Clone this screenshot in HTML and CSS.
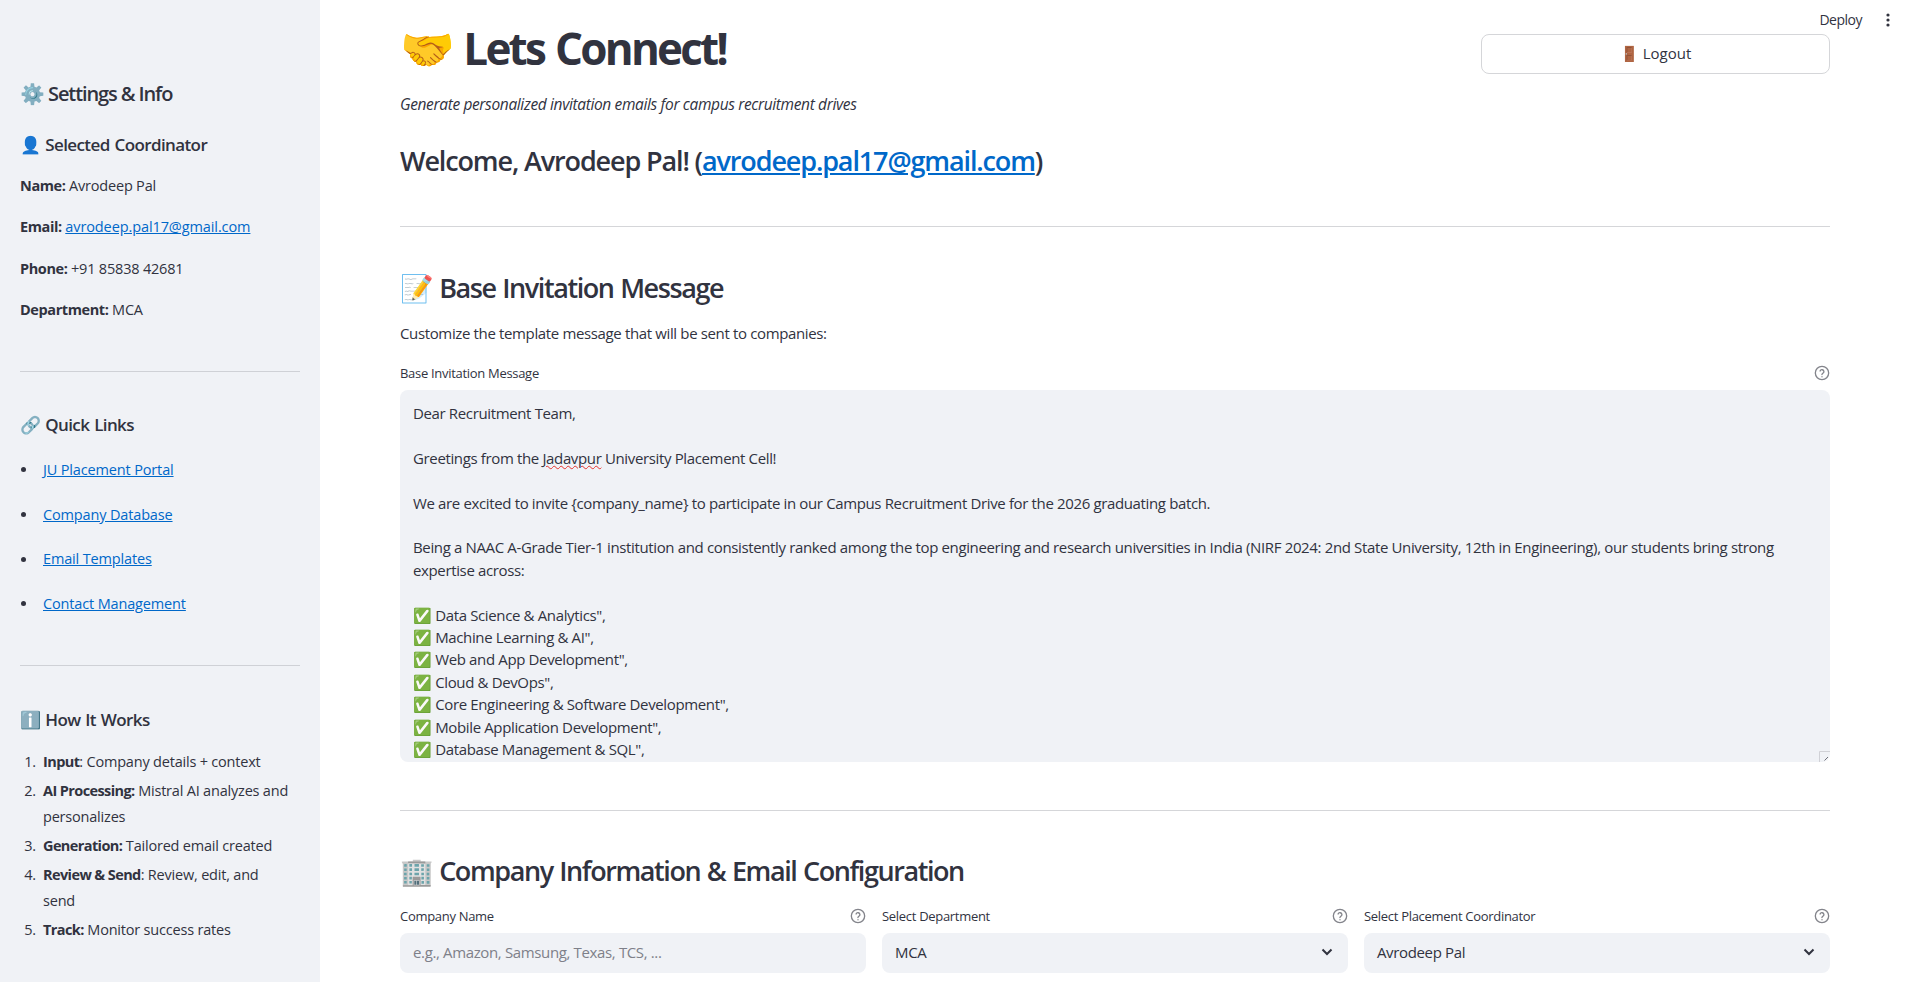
FILE: index.html
```html
<!DOCTYPE html>
<html lang="en">
<head>
  <meta charset="UTF-8" />
  <title>Lets Connect</title>
  <link rel="stylesheet" href="styles.css">
</head>
<body>
  <div class="app">
    <aside class="sidebar">
      <h2 class="side-title">⚙️ Settings &amp; Info</h2>
      <h3 class="side-head">👤 Selected Coordinator</h3>
      <p class="side-row"><b>Name:</b> Avrodeep Pal</p>
      <p class="side-row"><b>Email:</b> <a href="#">avrodeep.pal17@gmail.com</a></p>
      <p class="side-row"><b>Phone:</b> +91 85838 42681</p>
      <p class="side-row"><b>Department:</b> MCA</p>
      <hr class="side-rule">
      <h3 class="side-head">🔗 Quick Links</h3>
      <ul class="side-links">
        <li><a href="#">JU Placement Portal</a></li>
        <li><a href="#">Company Database</a></li>
        <li><a href="#">Email Templates</a></li>
        <li><a href="#">Contact Management</a></li>
      </ul>
      <hr class="side-rule">
      <h3 class="side-head">ℹ️ How It Works</h3>
      <ol class="side-steps">
        <li><b>Input</b>: Company details + context</li>
        <li><b>AI Processing:</b> Mistral AI analyzes and personalizes</li>
        <li><b>Generation:</b> Tailored email created</li>
        <li><b>Review &amp; Send</b>: Review, edit, and send</li>
        <li><b>Track:</b> Monitor success rates</li>
      </ol>
    </aside>

    <main class="main">
      <div class="topbar">
        <span class="deploy">Deploy</span>
        <svg class="dots" width="4" height="14" viewBox="0 0 4 14"><circle cx="2" cy="2" r="1.6"/><circle cx="2" cy="7" r="1.6"/><circle cx="2" cy="12" r="1.6"/></svg>
      </div>

      <div class="head-row">
        <h1 class="page-title">🤝 Lets Connect!</h1>
        <button class="logout">🚪 Logout</button>
      </div>
      <p class="subtitle">Generate personalized invitation emails for campus recruitment drives</p>
      <h3 class="welcome">Welcome, Avrodeep Pal! (<a href="#">avrodeep.pal17@gmail.com</a>)</h3>
      <hr class="rule rule-top">

      <h2 class="section">📝 Base Invitation Message</h2>
      <p class="intro">Customize the template message that will be sent to companies:</p>
      <div class="label-row">
        <label>Base Invitation Message</label>
        <svg class="help" viewBox="0 0 24 24"><circle cx="12" cy="12" r="10"/><path d="M9.1 9a3 3 0 0 1 5.8 1c0 2-3 2.6-3 4.2"/><path d="M12 17.6v.1"/></svg>
      </div>
      <div class="message">
        <p>Dear Recruitment Team,</p>
        <p>Greetings from the <span class="typo">Jadavpur</span> University Placement Cell!</p>
        <p>We are excited to invite {company_name} to participate in our Campus Recruitment Drive for the 2026 graduating batch.</p>
        <p>Being a NAAC A-Grade Tier-1 institution and consistently ranked among the top engineering and research universities in India (NIRF 2024: 2nd State University, 12th in Engineering), our students bring strong expertise across:</p>
        <p>✅ Data Science &amp; Analytics",<br>✅ Machine Learning &amp; AI",<br>✅ Web and App Development",<br>✅ Cloud &amp; DevOps",<br>✅ Core Engineering &amp; Software Development",<br>✅ Mobile Application Development",<br>✅ Database Management &amp; SQL",</p>
        <svg class="grip" width="11" height="11" viewBox="0 0 11 11"><path class="grip-box" d="M.5 11V.5H11"/><path class="grip-mark" d="M5.5 9.5 9 6M8 10l1.5-1.5"/></svg>
      </div>
      <hr class="rule rule-mid">

      <h2 class="section section-company">🏢 Company Information &amp; Email Configuration</h2>
      <div class="fields">
        <div class="field">
          <div class="label-row">
            <label>Company Name</label>
            <svg class="help" viewBox="0 0 24 24"><circle cx="12" cy="12" r="10"/><path d="M9.1 9a3 3 0 0 1 5.8 1c0 2-3 2.6-3 4.2"/><path d="M12 17.6v.1"/></svg>
          </div>
          <div class="control placeholder">e.g., Amazon, Samsung, Texas, TCS, ...</div>
        </div>
        <div class="field">
          <div class="label-row">
            <label>Select Department</label>
            <svg class="help" viewBox="0 0 24 24"><circle cx="12" cy="12" r="10"/><path d="M9.1 9a3 3 0 0 1 5.8 1c0 2-3 2.6-3 4.2"/><path d="M12 17.6v.1"/></svg>
          </div>
          <div class="control">MCA
            <svg class="chevron" width="12" height="8" viewBox="0 0 12 8"><path d="M1.5 1.5 6 6l4.5-4.5"/></svg>
          </div>
        </div>
        <div class="field">
          <div class="label-row">
            <label>Select Placement Coordinator</label>
            <svg class="help" viewBox="0 0 24 24"><circle cx="12" cy="12" r="10"/><path d="M9.1 9a3 3 0 0 1 5.8 1c0 2-3 2.6-3 4.2"/><path d="M12 17.6v.1"/></svg>
          </div>
          <div class="control">Avrodeep Pal
            <svg class="chevron" width="12" height="8" viewBox="0 0 12 8"><path d="M1.5 1.5 6 6l4.5-4.5"/></svg>
          </div>
        </div>
      </div>
    </main>
  </div>
</body>
</html>
```

FILE: styles.css
```css
* {
  box-sizing: border-box;
}
html, body {
  margin: 0;
  height: 982px;
  overflow: hidden;
  background: #fff;
}
body {
  font-family: "Open Sans", "Noto Sans", sans-serif;
  color: #31333f;
  font-size: 15px;
  letter-spacing: -0.36px;
}
a {
  color: #0068c9;
}
.app {
  display: flex;
  height: 982px;
}

/* sidebar */
.sidebar {
  width: 320px;
  flex: none;
  background: #f0f2f6;
  padding: 80px 20px 0;
}
.side-title {
  margin: 0 0 25px;
  font-size: 20px;
  font-weight: 600;
  line-height: 28px;
  letter-spacing: -1.1px;
}
.side-head {
  margin: 0 0 17px;
  font-size: 17px;
  font-weight: 600;
  line-height: 24px;
  letter-spacing: -0.6px;
  word-spacing: 1px;
}
.side-row {
  margin: 0 0 17.3px;
  font-size: 14.5px;
  line-height: 24px;
  letter-spacing: -0.2px;
}
.side-row b {
  letter-spacing: -0.4px;
}
.side-row a {
  letter-spacing: -0.1px;
}
.side-rule {
  border: 0;
  border-top: 1px solid #cfd1d6;
  margin: 49px 0 41px;
}
.side-links {
  margin: 0;
  padding: 4px 0 0 1px;
  list-style: none;
  font-size: 14.5px;
  line-height: 24px;
  letter-spacing: -0.15px;
}
.side-links li {
  display: flex;
  align-items: center;
  margin-bottom: 20.7px;
}
.side-links li::before {
  content: "";
  width: 5px;
  height: 5px;
  margin-right: 17px;
  border-radius: 50%;
  background: #31333f;
}
.side-links + .side-rule {
  margin: 49px 0 42.5px;
}
.side-steps {
  margin: 0;
  padding: 0 8px 0 23px;
  font-size: 14.5px;
  line-height: 26px;
  letter-spacing: -0.2px;
}
.side-steps b {
  letter-spacing: -0.6px;
}
.side-steps li {
  margin-bottom: 3px;
}
.side-steps li::marker {
  content: counter(list-item) ".\2002";
}

/* main column */
.main {
  flex: 1;
  position: relative;
  padding: 0 81px 0 80px;
  min-width: 0;
}
.topbar {
  position: absolute;
  top: 10px;
  right: 21px;
  display: flex;
  align-items: center;
  gap: 24px;
  font-size: 14px;
  letter-spacing: -0.5px;
}
.dots {
  fill: #31333f;
}
.head-row {
  display: flex;
  justify-content: space-between;
  align-items: flex-start;
  padding-top: 18px;
}
.page-title {
  margin: 0;
  font-size: 44px;
  font-weight: 700;
  line-height: 60px;
  letter-spacing: -2.8px;
  word-spacing: 2.5px;
}
.logout {
  width: 349px;
  height: 40px;
  margin-top: 16px;
  padding-bottom: 3px;
  background: #fff;
  border: 1px solid #d5d6d9;
  border-radius: 8px;
  font: inherit;
  font-size: 15px;
  color: #31333f;
}
.subtitle {
  margin: 14px 0 0;
  font-style: italic;
  font-size: 15.5px;
  line-height: 24px;
}
.welcome {
  margin: 26px 0 0;
  font-size: 27px;
  font-weight: 600;
  line-height: 38px;
  letter-spacing: -1.13px;
}
.rule {
  border: 0;
  border-top: 1px solid #d5d6d9;
  margin: 0;
}
.rule-top {
  margin-top: 46px;
}
.rule-mid {
  margin-top: 48px;
}
.section {
  margin: 42px 0 0;
  font-size: 27px;
  font-weight: 600;
  line-height: 38px;
  letter-spacing: -1.42px;
  word-spacing: 1px;
}
.section-company {
  line-height: 35px;
}
.intro {
  margin: 14px 0 0;
  font-size: 15px;
  line-height: 24px;
}
.label-row {
  display: flex;
  justify-content: space-between;
  align-items: center;
  height: 20px;
  margin-top: 18px;
  margin-bottom: 7px;
  font-size: 13px;
  letter-spacing: -0.3px;
}
.help {
  width: 16px;
  height: 16px;
  fill: none;
  stroke: #83848b;
  stroke-width: 2;
  stroke-linecap: round;
}
.message {
  position: relative;
  height: 372px;
  overflow: hidden;
  background: #f0f2f6;
  border-radius: 8px;
  padding: 12px 13px 0;
  font-size: 15px;
  line-height: 22.4px;
}
.message p {
  margin: 0 0 22.4px;
}
.typo {
  text-decoration: underline wavy #e5322d 1px;
}
.grip {
  position: absolute;
  right: 0;
  bottom: 0;
  fill: none;
}
.grip-box {
  stroke: #d0d1d6;
}
.grip-mark {
  stroke: #6f7079;
}
.fields {
  display: flex;
  gap: 16px;
}
.field {
  flex: 1;
  min-width: 0;
}
.control {
  display: flex;
  justify-content: space-between;
  align-items: center;
  height: 40px;
  padding: 0 13px 2px;
  background: #f0f2f6;
  border-radius: 8px;
  font-size: 15px;
}
.placeholder {
  color: #7e8089;
}
.chevron {
  fill: none;
  stroke: #31333f;
  stroke-width: 2;
  margin-right: 2px;
}
```
